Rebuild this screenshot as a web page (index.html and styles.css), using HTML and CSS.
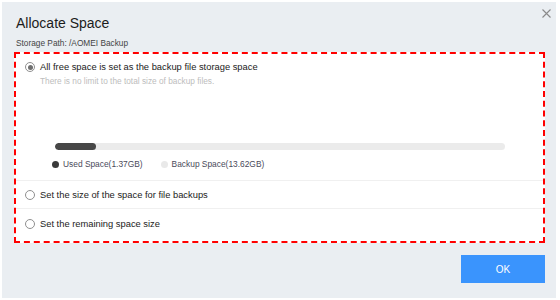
FILE: index.html
```html
<!DOCTYPE html>
<html lang="en">
<head>
    <meta charset="UTF-8">
    <title>Allocate Space</title>
    <link rel="stylesheet" href="styles.css">
</head>
<body>
    <div class="dialog">
        <button class="close" aria-label="Close">
            <svg width="9" height="9" viewBox="0 0 9 9"><path d="M0.5 0.5 L8.5 8.5 M8.5 0.5 L0.5 8.5" stroke="#8a8a8a" stroke-width="1.1" fill="none"/></svg>
        </button>
        <h1 class="title">Allocate Space</h1>
        <p class="path">Storage Path: /AOMEI Backup</p>

        <div class="panel">
            <div class="option option-first">
                <label class="radio-row">
                    <span class="radio checked"></span>
                    <span class="radio-text">All free space is set as the backup file storage space</span>
                </label>
                <p class="hint">There is no limit to the total size of backup files.</p>
                <div class="bar">
                    <div class="bar-fill" style="width: 9.1%"></div>
                </div>
                <div class="legend">
                    <span class="legend-item"><span class="dot dot-used"></span>Used Space(1.37GB)</span>
                    <span class="legend-item"><span class="dot dot-free"></span>Backup Space(13.62GB)</span>
                </div>
            </div>
            <div class="option">
                <label class="radio-row">
                    <span class="radio"></span>
                    <span class="radio-text">Set the size of the space for file backups</span>
                </label>
            </div>
            <div class="option option-last">
                <label class="radio-row">
                    <span class="radio"></span>
                    <span class="radio-text">Set the remaining space size</span>
                </label>
            </div>
        </div>

        <div class="footer">
            <button class="btn-ok">OK</button>
        </div>
    </div>
</body>
</html>
```

FILE: styles.css
```css
body {
    margin: 0;
    background-color: #ffffff;
    font-family: "Liberation Sans", Arial, sans-serif;
    color: #333;
}
.dialog {
    position: relative;
    margin: 2px 0 0 2px;
    width: 554px;
    height: 296px;
    box-sizing: border-box;
    padding: 13px 11px 0 12px;
    background-color: #eaeef2;
}
.close {
    position: absolute;
    top: 7px;
    right: 5px;
    width: 9px;
    height: 9px;
    padding: 0;
    border: none;
    background: none;
    cursor: pointer;
    line-height: 0;
}
.title {
    margin: 0 0 6px 2px;
    font-size: 14px;
    line-height: 17px;
    font-weight: normal;
    color: #1c1c1c;
}
.path {
    margin: 0 0 4px 2px;
    font-size: 8.3px;
    line-height: 10px;
    color: #444;
}
.panel {
    border: 2px dashed #ff0000;
    background-color: #ffffff;
    padding-bottom: 3px;
}
.option {
    border-bottom: 1px solid #f0f0f0;
    height: 27px;
    display: flex;
    align-items: center;
    padding-left: 9px;
}
.option-first {
    display: block;
    height: auto;
    padding: 7px 38px 11px 9px;
}
.option-last {
    border-bottom: none;
    height: 29px;
}
.radio-row {
    display: flex;
    align-items: center;
    gap: 5px;
    font-size: 9.35px;
    line-height: 12px;
    color: #222;
    cursor: pointer;
}
.radio {
    width: 10px;
    height: 10px;
    box-sizing: border-box;
    border: 1px solid #8f8f8f;
    border-radius: 50%;
    display: flex;
    align-items: center;
    justify-content: center;
    background-color: #fff;
}
.radio.checked::after {
    content: "";
    width: 5px;
    height: 5px;
    border-radius: 50%;
    background-color: #6f6f6f;
}
.hint {
    margin: 3px 0 0 15px;
    font-size: 8.3px;
    line-height: 10px;
    color: #bdbdbd;
}
.bar {
    margin: 57px 0 0 30px;
    height: 7px;
    border-radius: 4px;
    background-color: #ebebeb;
    overflow: hidden;
}
.bar-fill {
    height: 100%;
    border-radius: 4px;
    background-color: #474747;
}
.legend {
    display: flex;
    margin: 9px 0 0 27px;
    gap: 18px;
    font-size: 8.4px;
    line-height: 10px;
    color: #4a4a5a;
}
.legend-item {
    display: flex;
    align-items: center;
    gap: 4px;
}
.dot {
    width: 7px;
    height: 7px;
    border-radius: 50%;
}
.dot-used {
    background-color: #3a3a3a;
}
.dot-free {
    background-color: #e9e9e9;
}
.footer {
    display: flex;
    justify-content: flex-end;
    margin-top: 12px;
}
.btn-ok {
    width: 84px;
    height: 28px;
    border: none;
    background-color: #3a94fd;
    color: #ffffff;
    font-family: "Liberation Sans", Arial, sans-serif;
    font-size: 10px;
    cursor: pointer;
}
```
